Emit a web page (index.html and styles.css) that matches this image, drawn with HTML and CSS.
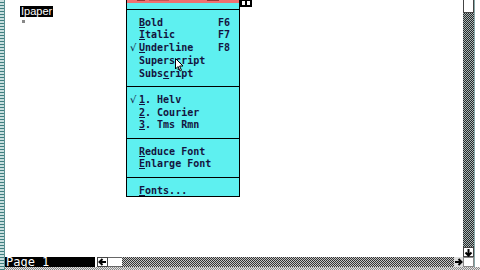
FILE: index.html
```html
<!DOCTYPE html>
<html>
<head>
<meta charset="utf-8">
<link rel="stylesheet" href="styles.css">
</head>
<body>
<div class="screen">
  <div class="lstrip"></div>
  <div class="col">
    <div class="main">
      <div class="doc">
        <div class="sel">Ipaper</div>
        <div class="mark"></div>
      </div>
      <div class="vscroll">
        <div class="vthumb"></div>
        <div class="vtrack"></div>
        <div class="vdown">
          <svg width="9" height="9" viewBox="0 0 9 9"><path d="M4.5 1v5M1.5 4.5L4.5 7.5L7.5 4.5" stroke="#000" stroke-width="2" fill="none"/></svg>
        </div>
      </div>
      <div class="rmargin"></div>
    </div>
    <div class="hbar">
      <div class="page">Page 1</div>
      <div class="hgap"></div>
      <div class="hleft">
        <svg width="9" height="8" viewBox="0 0 9 8"><path d="M8 4H3M4.5 1L1.5 4L4.5 7" stroke="#000" stroke-width="2" fill="none"/></svg>
      </div>
      <div class="hthumb"></div>
      <div class="htrack"></div>
      <div class="hright">
        <svg width="9" height="8" viewBox="0 0 9 8"><path d="M1 4H6M4.5 1L7.5 4L4.5 7" stroke="#000" stroke-width="2" fill="none"/></svg>
      </div>
      <div class="sizebox"></div>
      <div class="rmargin"></div>
    </div>
    <div class="bstrip"></div>
  </div>
</div>

<div class="menu">
  <div class="mtitle"><i class="tt t1"></i><i class="tt t2"></i><i class="tt t3"></i></div>
  <div class="mtop"></div>
  <div class="grp g1">
    <div class="item"><span class="chk"></span><span class="lbl"><u>B</u>old</span><span class="key">F6</span></div>
    <div class="item"><span class="chk"></span><span class="lbl"><u>I</u>talic</span><span class="key">F7</span></div>
    <div class="item"><span class="chk">&#x221A;</span><span class="lbl"><u>U</u>nderline</span><span class="key">F8</span></div>
    <div class="item"><span class="chk"></span><span class="lbl">Supers<u>c</u>ript</span><span class="key"></span></div>
    <div class="item"><span class="chk"></span><span class="lbl">Subs<u>c</u>ript</span><span class="key"></span></div>
  </div>
  <div class="grp g2">
    <div class="item"><span class="chk">&#x221A;</span><span class="lbl"><u>1</u>. Helv</span></div>
    <div class="item"><span class="chk"></span><span class="lbl"><u>2</u>. Courier</span></div>
    <div class="item"><span class="chk"></span><span class="lbl"><u>3</u>. Tms Rmn</span></div>
  </div>
  <div class="grp g3">
    <div class="item"><span class="chk"></span><span class="lbl"><u>R</u>educe Font</span></div>
    <div class="item"><span class="chk"></span><span class="lbl"><u>E</u>nlarge Font</span></div>
  </div>
  <div class="grp g4">
    <div class="item"><span class="chk"></span><span class="lbl"><u>F</u>onts...</span></div>
  </div>
</div>

<div class="barbit"><span></span><span></span></div>

<svg class="cursor" width="9" height="14" viewBox="0 0 9 14"><path d="M0.5 0.5V11L3 8.5L5 13L6.5 12.3L4.6 8H8Z" fill="#fff" stroke="#000" stroke-width="1"/></svg>
</body>
</html>
```

FILE: styles.css
```css
html, body {
  margin: 0;
  padding: 0;
  width: 480px;
  height: 270px;
  overflow: hidden;
  background: #fff;
}

.screen {
  display: flex;
  width: 480px;
  height: 270px;
}

.lstrip {
  width: 5px;
  flex: none;
  background-color: #9cc;
  background-image: repeating-linear-gradient(0deg, #3f7f80 0 1px, #c8dede 1px 3px);
  border-right: 1px solid #5a9090;
  box-sizing: border-box;
}

.col {
  flex: 1;
  display: flex;
  flex-direction: column;
}

.main {
  flex: 1;
  display: flex;
}

.doc {
  flex: 1;
  position: relative;
  padding: 6px 0 0 15px;
}

.sel {
  width: fit-content;
  background: #000;
  color: #fff;
  font-family: "Liberation Sans", Arial, sans-serif;
  font-size: 11px;
  line-height: 11px;
  height: 11px;
  padding: 0 1px;
}

.mark {
  width: 3px;
  height: 3px;
  background: #888;
  margin: 3px 0 0 2px;
}

.vscroll {
  width: 11px;
  flex: none;
  display: flex;
  flex-direction: column;
}

.vthumb {
  height: 13px;
  background: #fff;
  border: 1px solid #444;
  border-top: none;
  box-sizing: border-box;
}

.vtrack {
  flex: 1;
  background-color: #555;
  background-image: repeating-conic-gradient(#262a2a 0 25%, #a8b4b4 0 50%);
  background-size: 2px 2px;
}

.vdown {
  height: 10px;
  background: #fff;
  border: 1px solid #444;
  box-sizing: border-box;
  display: flex;
  align-items: center;
  justify-content: center;
}

.rmargin {
  width: 6px;
  flex: none;
  background: #fff;
  border-left: 1px solid #8aa;
  box-sizing: border-box;
}

.hbar {
  height: 10px;
  flex: none;
  display: flex;
}

.page {
  width: 90px;
  background: #000;
  color: #fff;
  font-family: "DejaVu Sans Mono", monospace;
  font-size: 12px;
  line-height: 10px;
  padding-left: 1px;
  box-sizing: border-box;
}

.hgap {
  width: 2px;
  background: #fff;
}

.hleft, .hright {
  width: 11px;
  background: #fff;
  border: 1px solid #444;
  box-sizing: border-box;
  display: flex;
  align-items: center;
  justify-content: center;
}

.hright {
  width: 9px;
  border: none;
  background: #ddd;
}

.hthumb {
  width: 14px;
  background: #fff;
  border-top: 1px solid #666;
  border-bottom: 1px solid #666;
  box-sizing: border-box;
}

.htrack {
  flex: 1;
  background-color: #777;
  background-image: repeating-conic-gradient(#333 0 25%, #c4c4c4 0 50%);
  background-size: 2px 2px;
}

.sizebox {
  width: 11px;
  background: #fff;
  border: 1px solid #888;
  box-sizing: border-box;
}

.bstrip {
  height: 3px;
  flex: none;
  background-image: repeating-conic-gradient(#888 0 25%, #e4e4e4 0 50%);
  background-size: 2px 2px;
}

/* dropdown menu */
.menu {
  position: absolute;
  left: 126px;
  top: 0;
  width: 114px;
  background: #5ef0f0;
  border: 1px solid #000;
  border-top: none;
  box-sizing: border-box;
  font-family: "DejaVu Sans Mono", monospace;
  font-size: 10px;
  font-weight: bold;
  color: #141440;
}

.mtitle {
  height: 3px;
  background: #f07070;
  display: flex;
  align-items: flex-start;
}

.tt {
  display: block;
  height: 1px;
  background: #a03434;
}
.t1 { width: 8px; margin-left: 10px; }
.t2 { width: 20px; margin-left: 4px; opacity: 0.5; }
.t3 { width: 12px; margin-left: 38px; }

.mtop {
  height: 6px;
  border-bottom: 1px solid #000;
}

.grp {
  padding: 6.5px 0 6px;
  border-bottom: 1px solid #000;
}

.g4 {
  border-bottom: none;
  padding-bottom: 0;
}

.item {
  display: flex;
  height: 12.75px;
  line-height: 12.75px;
  white-space: pre;
}

.g4 .item {
  height: 11px;
  line-height: 11.5px;
}

.chk {
  width: 9px;
  padding-left: 3px;
  font-weight: normal;
  font-family: "DejaVu Sans", sans-serif;
  font-size: 10px;
}

.lbl {
  width: 79px;
}

.key {
  width: 20px;
}

u {
  text-decoration-thickness: 1px;
  text-underline-offset: 1px;
}

.barbit {
  position: absolute;
  left: 240px;
  top: 0;
  width: 12px;
  height: 7px;
  background: #000;
  display: flex;
  gap: 2px;
  padding: 1px 2px;
  box-sizing: border-box;
}
.barbit span {
  width: 3px;
  height: 4px;
  background: #fff;
}

.cursor {
  position: absolute;
  left: 175px;
  top: 58px;
}
```
